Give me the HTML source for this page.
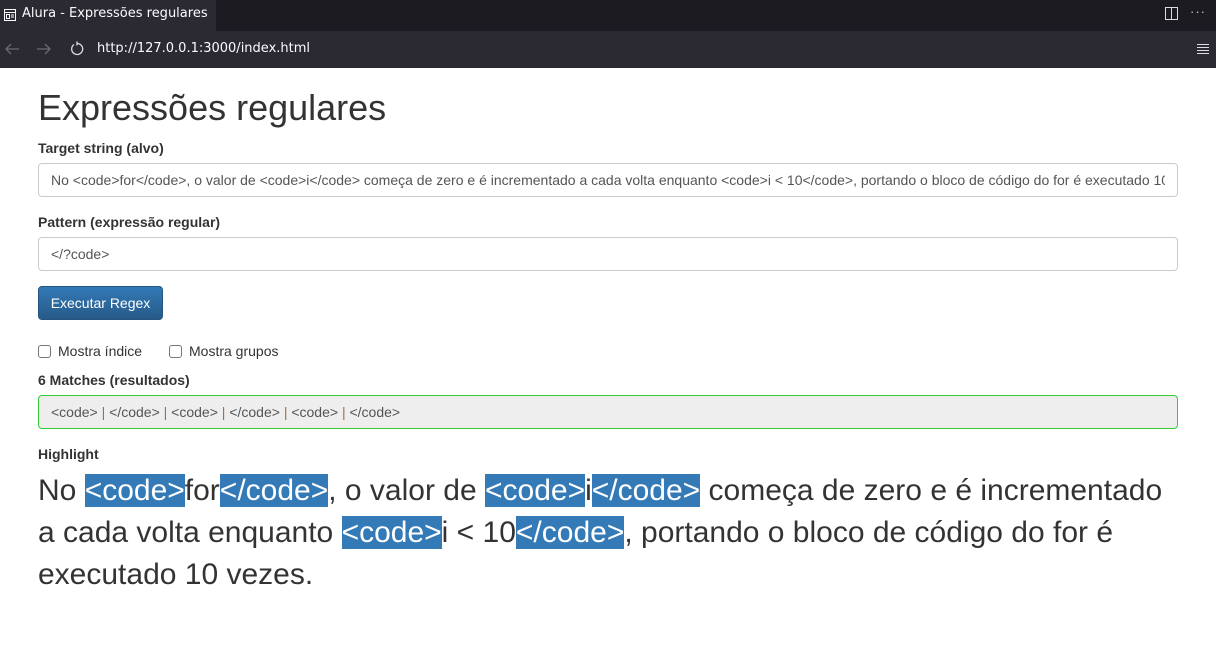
<!DOCTYPE html>
<html><head><meta charset="utf-8"><style>
*{box-sizing:border-box}
body{margin:0;width:1216px;height:669px;overflow:hidden;background:#fff;font-family:"Liberation Sans",sans-serif;color:#333}
.tabbar{height:31px;background:#1c1b22;position:relative}
.tab{position:absolute;left:0;top:0;width:216px;height:31px;background:#2b2a33;color:#fbfbfe;font-size:13px;line-height:28px;padding-left:22px;font-family:"DejaVu Sans","Liberation Sans",sans-serif}
.tab svg{position:absolute;left:3px;top:8px}
.toolbar{height:37px;background:#2b2a33;position:relative;color:#fbfbfe;font-family:"DejaVu Sans","Liberation Sans",sans-serif}
.url{position:absolute;left:97px;top:10px;font-size:13px}
.main{padding:0 38px}
h1{font-weight:400;font-size:36px;margin:20px 0 0;line-height:40px;height:40px;color:#333}
label.l{display:block;font-weight:bold;font-size:14px;line-height:20px}
.in{height:34px;border:1px solid #ccc;border-radius:4px;padding:0 12px;font-size:14px;line-height:32px;color:#555;white-space:nowrap;overflow:hidden;width:1140px}
.in .clip{display:block;overflow:hidden;width:1114px}
.btn{position:absolute;left:38px;top:286px;width:125px;height:34px;border-radius:4px;background:linear-gradient(#337ab7,#265a88);border:1px solid #245580;color:#fff;font-size:14px;line-height:32px;text-align:center}
.cb{position:absolute;top:343px;font-size:14px;line-height:16px}
.cb span{display:inline-block;width:13px;height:13px;border:1px solid #767676;border-radius:3px;vertical-align:-2px;margin-right:7px;background:#fff}
.hl{position:absolute;left:38px;top:470px;width:1140px;font-size:30px;line-height:42px;color:#333}
.hl b{font-weight:400;background:#337ab7;color:#fff}
.sep{color:#a07040}
</style></head><body>
<div class="tabbar"><div class="tab"><svg width="14" height="14" viewBox="0 0 14 14" fill="none" stroke="#fbfbfe" stroke-width="1"><rect x="1.5" y="1.5" width="11" height="11"/><line x1="1.5" y1="4.5" x2="12.5" y2="4.5"/><rect x="3.5" y="6.5" width="3" height="4"/><line x1="8" y1="7" x2="11" y2="7"/><line x1="8" y1="9" x2="11" y2="9"/></svg>Alura - Expressões regulares</div>
<svg style="position:absolute;left:1165px;top:7px" width="14" height="14" fill="none" stroke="#ddd"><rect x="0.5" y="0.5" width="12" height="12"/><line x1="6.5" y1="0" x2="6.5" y2="13"/></svg>
<div style="position:absolute;left:1190px;top:4px;color:#ccc;font-size:13px;letter-spacing:1px">···</div></div>
<div class="toolbar">
<svg style="position:absolute;left:4px;top:11px" width="16" height="14" fill="none" stroke="#6b6a72" stroke-width="1.3"><path d="M15 7H2M7 2L2 7l5 5"/></svg>
<svg style="position:absolute;left:36px;top:11px" width="16" height="14" fill="none" stroke="#6b6a72" stroke-width="1.3"><path d="M1 7h13M9 2l5 5-5 5"/></svg>
<svg style="position:absolute;left:69px;top:10px" width="16" height="16" fill="none" stroke="#ddd" stroke-width="1.3"><path d="M5 3.5A5.5 5.5 0 1 0 8 2.5"/><path d="M8 0.5v4"/></svg>
<div class="url">http://127.0.0.1:3000/index.html</div>
<svg style="position:absolute;left:1197px;top:12px" width="12" height="12" stroke="#ddd"><path d="M0 1.5h12M0 4.5h12M0 7.5h12M0 10.5h12"/></svg>
</div>
<div class="main">
<h1>Expressões regulares</h1>
<div style="position:absolute;left:38px;top:138px"><label class="l">Target string (alvo)</label></div>
<div class="in" style="position:absolute;left:38px;top:163px"><span class="clip">No &lt;code&gt;for&lt;/code&gt;, o valor de &lt;code&gt;i&lt;/code&gt; começa de zero e é incrementado a cada volta enquanto &lt;code&gt;i &lt; 10&lt;/code&gt;, portando o bloco de código do for é executado 10 vezes.</span></div>
<div style="position:absolute;left:38px;top:212px"><label class="l">Pattern (expressão regular)</label></div>
<div class="in" style="position:absolute;left:38px;top:237px">&lt;/?code&gt;</div>
<div class="btn">Executar Regex</div>
<div class="cb" style="left:38px"><span></span>Mostra índice</div>
<div class="cb" style="left:169px"><span></span>Mostra grupos</div>
<div style="position:absolute;left:38px;top:370px"><label class="l">6 Matches (resultados)</label></div>
<div class="in" style="position:absolute;left:38px;top:395px;background:#eee;border-color:#3c3">&lt;code&gt; <span class="sep">|</span> &lt;/code&gt; <span class="sep">|</span> &lt;code&gt; <span class="sep">|</span> &lt;/code&gt; <span class="sep">|</span> &lt;code&gt; <span class="sep">|</span> &lt;/code&gt;</div>
<div style="position:absolute;left:38px;top:444px"><label class="l">Highlight</label></div>
<div class="hl">No <b>&lt;code&gt;</b>for<b>&lt;/code&gt;</b>, o valor de <b>&lt;code&gt;</b>i<b>&lt;/code&gt;</b> começa de zero e é incrementado a cada volta enquanto <b>&lt;code&gt;</b>i &lt; 10<b>&lt;/code&gt;</b>, portando o bloco de código do for é executado 10 vezes.</div>
</div>
</body></html>
